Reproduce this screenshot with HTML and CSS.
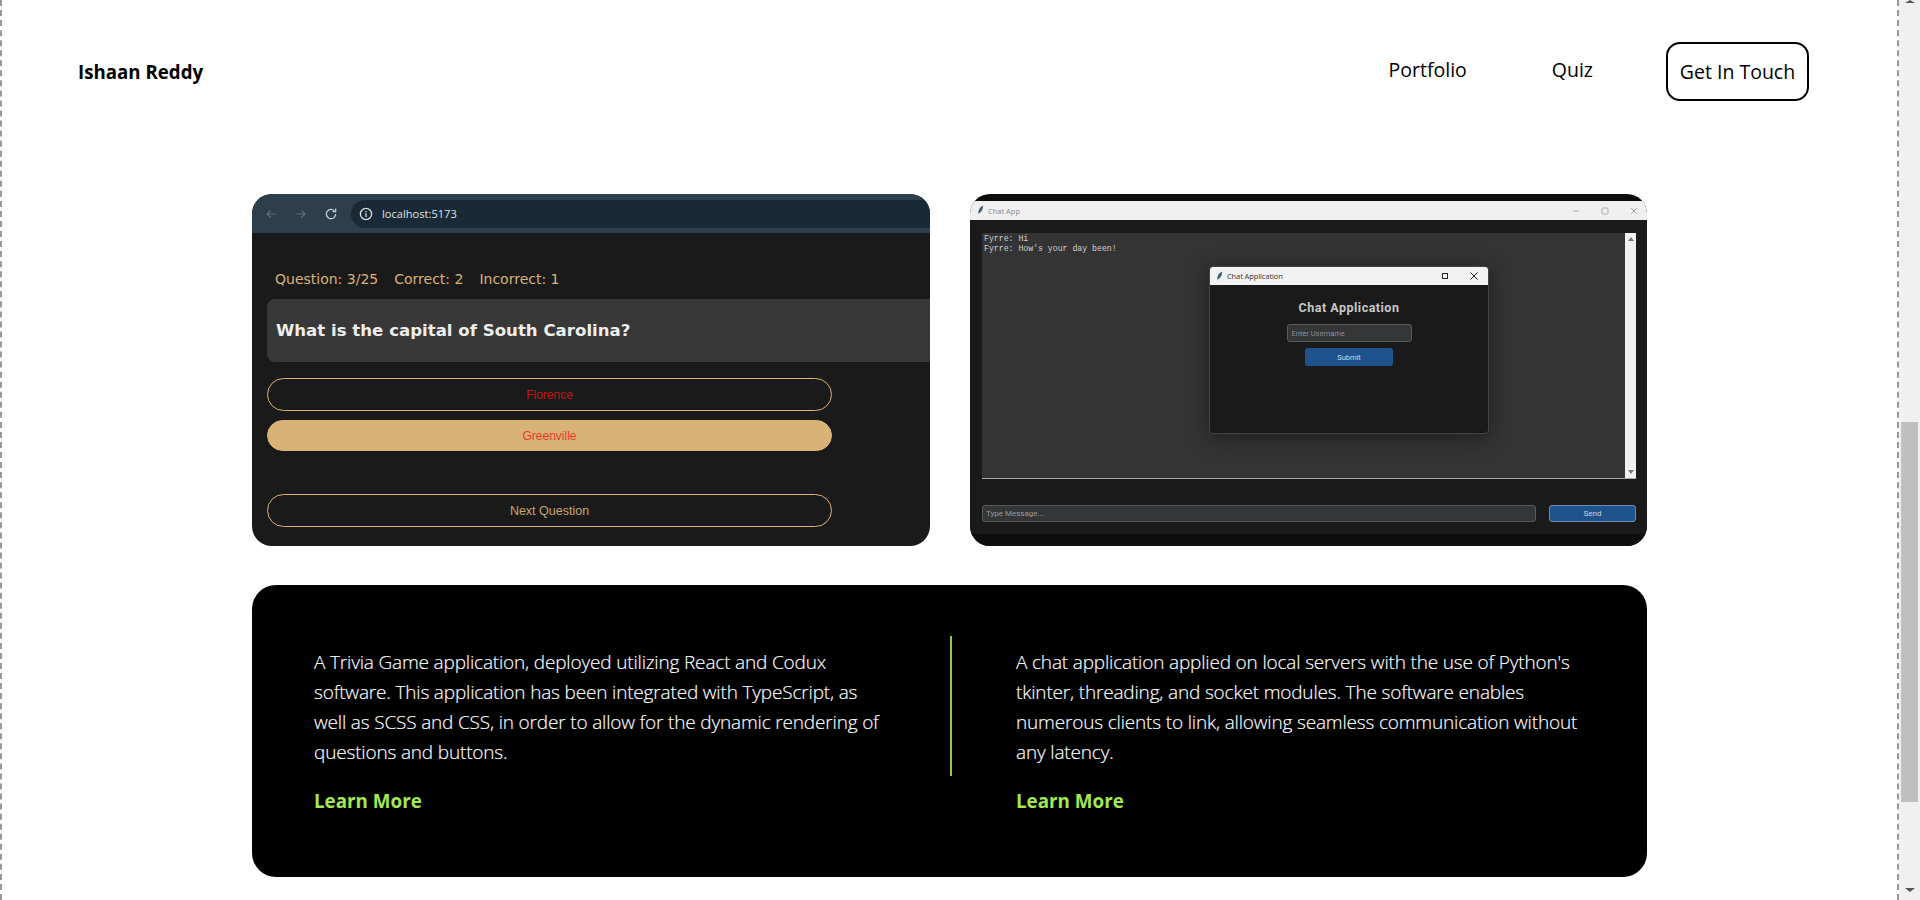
FILE: index.html
```html
<!DOCTYPE html>
<html lang="en">
<head>
    <meta charset="UTF-8">
    <meta name="viewport" content="width=device-width, initial-scale=1.0">
    <title>Ishaan Reddy</title>
    <link rel="stylesheet" href="styles.css">
</head>
<body>
    <div class="page">
        <header class="site-header">
            <div class="brand">Ishaan Reddy</div>
            <nav class="site-nav">
                <a class="nav-link nav-portfolio" href="#">Portfolio</a>
                <a class="nav-link nav-quiz" href="#">Quiz</a>
                <a class="nav-button" href="#">Get In Touch</a>
            </nav>
        </header>

        <main class="projects">
            <div class="shots">
                <!-- trivia game screenshot -->
                <div class="shot trivia">
                    <div class="browser-bar">
                        <svg class="bar-icon" viewBox="0 0 12 12"><path d="M10.5 6H2M5.5 2.5 2 6l3.500 3.500" fill="none" stroke="#5f6f7c" stroke-width="1.100"/></svg>
                        <svg class="bar-icon" viewBox="0 0 12 12"><path d="M1.500 6H10M6.500 2.500 10 6 6.500 9.500" fill="none" stroke="#5f6f7c" stroke-width="1.100"/></svg>
                        <svg class="bar-icon reload" viewBox="0 0 12 12"><path d="M10 6a4 4 0 1 1-1.200-2.850M10 1.300v2.600H7.400" fill="none" stroke="#c6ced4" stroke-width="1.100"/></svg>
                        <div class="url-pill">
                            <svg class="info-icon" viewBox="0 0 12 12"><circle cx="6" cy="6" r="4.800" fill="none" stroke="#dfe4e8" stroke-width="1.100"/><path d="M6 5.300v3.200M6 3.400v1" stroke="#dfe4e8" stroke-width="1.100"/></svg>
                            <span>localhost:5173</span>
                        </div>
                    </div>
                    <div class="quiz-body">
                        <div class="stats"><span>Question: 3/25</span><span>Correct: 2</span><span>Incorrect: 1</span></div>
                        <div class="question">What is the capital of South Carolina?</div>
                        <div class="answer wrong">Florence</div>
                        <div class="answer picked">Greenville</div>
                        <div class="answer next">Next Question</div>
                    </div>
                </div>

                <!-- chat app screenshot -->
                <div class="shot chat">
                    <div class="win-title">
                        <svg class="feather" viewBox="0 0 8 12"><path d="M7 0.500C3.500 1.500 1.500 5 1.500 8.500L0.800 11.500L1.800 9C5 8.500 7 4.500 7 0.500Z" fill="#3c5a78"/></svg>
                        <span class="win-name">Chat App</span>
                        <div class="win-controls">
                            <svg viewBox="0 0 10 10"><path d="M2 5h6" stroke="#aaa"/></svg>
                            <svg viewBox="0 0 10 10"><rect x="2" y="2" width="6" height="6" rx="1" fill="none" stroke="#aaa"/></svg>
                            <svg viewBox="0 0 10 10"><path d="M2 2l6 6M8 2l-6 6" stroke="#aaa"/></svg>
                        </div>
                    </div>
                    <div class="chat-body">
                        <div class="log-row">
                            <div class="log">Fyrre: Hi<br>Fyrre: How's your day been!</div>
                            <div class="log-scroll"><i class="tri-up"></i><i class="tri-down"></i></div>
                        </div>
                        <div class="entry-row">
                            <div class="entry">Type Message...</div>
                            <div class="send">Send</div>
                        </div>
                    </div>
                    <div class="chat-foot"></div>

                    <div class="modal">
                        <div class="modal-title">
                            <svg class="feather" viewBox="0 0 8 12"><path d="M7 0.500C3.500 1.500 1.500 5 1.500 8.500L0.800 11.500L1.800 9C5 8.500 7 4.500 7 0.500Z" fill="#3c5a78"/></svg>
                            <span class="modal-name">Chat Application</span>
                            <div class="modal-controls">
                                <svg viewBox="0 0 10 10"><rect x="2.500" y="2.500" width="5" height="5" fill="none" stroke="#222"/></svg>
                                <svg viewBox="0 0 10 10"><path d="M1.500 1.500l7 7M8.500 1.500l-7 7" stroke="#222"/></svg>
                            </div>
                        </div>
                        <div class="modal-body">
                            <div class="modal-heading">Chat Application</div>
                            <div class="modal-input">Enter Username</div>
                            <div class="modal-submit">Submit</div>
                        </div>
                    </div>
                </div>
            </div>

            <section class="panel">
                <div class="panel-col">
                    <p>A Trivia Game application, deployed utilizing React and Codux software. This application has been integrated with TypeScript, as well as SCSS and CSS, in order to allow for the dynamic rendering of questions and buttons.</p>
                    <a class="learn" href="#">Learn More</a>
                </div>
                <div class="panel-divider"></div>
                <div class="panel-col panel-col-right">
                    <p>A chat application applied on local servers with the use of Python's tkinter, threading, and socket modules. The software enables numerous clients to link, allowing seamless communication without any latency.</p>
                    <a class="learn" href="#">Learn More</a>
                </div>
            </section>
        </main>
    </div>

    <div class="scrollbar">
        <i class="scroll-up"></i>
        <div class="scroll-thumb"></div>
        <i class="scroll-down"></i>
    </div>
</body>
</html>
```

FILE: styles.css
```css
* {
    box-sizing: border-box;
}
body {
    margin: 0;
    height: 900px;
    display: flex;
    overflow: hidden;
    background-color: #fff;
    color: #000;
    font-family: "Open Sans", "Liberation Sans", sans-serif;
}
a {
    color: inherit;
    text-decoration: none;
}
.page {
    flex: 1;
    min-width: 0;
    border-left: 2px dashed #999;
    border-right: 2px dashed #999;
}

/* header */
.site-header {
    display: flex;
    justify-content: space-between;
    align-items: center;
    padding: 42px 88px 0 76px;
}
.brand {
    font-size: 18.700px;
    font-weight: 700;
}
.site-nav {
    display: flex;
    align-items: center;
}
.nav-link {
    font-size: 19.500px;
    margin-top: -4px;
}
.nav-portfolio {
    margin-right: 85px;
}
.nav-quiz {
    margin-right: 73px;
}
.nav-button {
    display: flex;
    align-items: center;
    justify-content: center;
    width: 143px;
    height: 59px;
    font-size: 19.500px;
    border: 2px solid #000;
    border-radius: 14px;
}

/* screenshots */
.projects {
    width: 1395px;
    margin: 93px auto 0;
}
.shots {
    display: grid;
    grid-template-columns: 678px 677px;
    gap: 40px;
}
.shot {
    position: relative;
    height: 352px;
    overflow: hidden;
    border-radius: 20px;
}
.trivia {
    background-color: #1a1a1a;
    font-family: "DejaVu Sans", sans-serif;
}
.browser-bar {
    display: flex;
    align-items: center;
    height: 39px;
    padding: 0 0 0 13px;
    background-color: #2d3e4d;
}
.bar-icon {
    width: 12px;
    height: 12px;
    margin-right: 18px;
}
.reload {
    width: 14px;
    height: 14px;
    margin-left: -1px;
    margin-right: 0;
}
.url-pill {
    flex: 1;
    display: flex;
    align-items: center;
    height: 28px;
    margin-left: 13px;
    padding-left: 8px;
    border-radius: 14px 0 0 14px;
    background-color: #192936;
    color: #dfe4e8;
    font-family: "Open Sans", sans-serif;
    font-size: 11.100px;
}
.info-icon {
    width: 14px;
    height: 14px;
    margin-right: 9px;
}
.quiz-body {
    padding: 37px 0 0 15px;
}
.stats {
    display: flex;
    gap: 16px;
    padding-left: 8px;
    font-size: 14px;
    line-height: 18px;
    color: #d9b277;
}
.question {
    display: flex;
    align-items: center;
    height: 63px;
    margin-top: 11px;
    padding-left: 9px;
    border-radius: 8px 0 0 8px;
    background-color: #383838;
    color: #eee;
    font-size: 16.600px;
    font-weight: 700;
}
.answer {
    display: flex;
    align-items: center;
    justify-content: center;
    width: 565px;
    height: 33px;
    margin-top: 9px;
    border: 1.500px solid #d9b277;
    border-radius: 17px;
    font-family: "Liberation Sans", sans-serif;
    font-size: 12px;
}
.wrong {
    margin-top: 16px;
    color: #c01818;
}
.picked {
    height: 31px;
    background-color: #d9b277;
    color: #e53b2a;
}
.next {
    margin-top: 43px;
    font-size: 12.500px;
    color: #c9a672;
}

/* chat window */
.chat {
    padding-top: 7px;
    background-color: #0d0d0d;
}
.win-title {
    display: flex;
    align-items: center;
    height: 19px;
    padding-left: 7px;
    background-color: #f0f0f0;
}
.feather {
    width: 7px;
    height: 11px;
}
.win-name {
    margin-left: 4px;
    font-size: 7.500px;
    color: #8a8a8a;
}
.win-controls {
    display: flex;
    gap: 19px;
    margin-left: auto;
    padding-right: 8px;
}
.win-controls svg {
    width: 10px;
    height: 10px;
}
.chat-body {
    height: 314px;
    padding: 13px 11px 0 12px;
    background-color: #1a1a1a;
}
.log-row {
    display: flex;
    height: 246px;
    border-bottom: 1px solid #aaa;
}
.log {
    flex: 1;
    padding: 1px 2px;
    background-color: #343434;
    color: #cfcfcf;
    font-family: "Liberation Mono", monospace;
    font-size: 8.200px;
    line-height: 10px;
}
.log-scroll {
    display: flex;
    flex-direction: column;
    justify-content: space-between;
    align-items: center;
    width: 11px;
    padding: 4px 0;
    background-color: #f0f0f0;
}
.tri-up,
.tri-down {
    width: 0;
    height: 0;
    border-left: 3px solid transparent;
    border-right: 3px solid transparent;
}
.tri-up {
    border-bottom: 4px solid #777;
}
.tri-down {
    border-top: 4px solid #777;
}
.entry-row {
    display: flex;
    gap: 13px;
    margin-top: 26px;
}
.entry {
    flex: 1;
    display: flex;
    align-items: center;
    height: 17px;
    padding-left: 3px;
    border: 1px solid #565b5e;
    border-radius: 3px;
    background-color: #343638;
    color: #9a9a9a;
    font-family: "Roboto", sans-serif;
    font-size: 8px;
}
.send {
    display: flex;
    align-items: center;
    justify-content: center;
    width: 87px;
    height: 17px;
    border: 1px solid #6f8fb0;
    border-radius: 3px;
    background-color: #1f538d;
    color: #ccd6e0;
    font-family: "Roboto", sans-serif;
    font-size: 8px;
}
.chat-foot {
    height: 12px;
    background-color: #0d0d0d;
}
.modal {
    position: absolute;
    left: 239px;
    top: 72px;
    width: 280px;
    height: 168px;
    overflow: hidden;
    border: 1px solid #444;
    border-radius: 4px;
    background-color: #1a1a1a;
    box-shadow: 0 3px 20px rgba(0, 0, 0, 0.45);
}
.modal-title {
    display: flex;
    align-items: center;
    height: 18px;
    padding-left: 6px;
    background-color: #f2f2f2;
}
.modal-name {
    margin-left: 4px;
    font-size: 7.500px;
    letter-spacing: -0.100px;
    color: #333;
}
.modal-controls {
    display: flex;
    gap: 19px;
    margin-left: auto;
    padding-right: 9px;
}
.modal-controls svg {
    width: 10px;
    height: 10px;
}
.modal-body {
    display: flex;
    flex-direction: column;
    align-items: center;
    font-family: "Roboto", sans-serif;
}
.modal-heading {
    margin-top: 15px;
    font-size: 12.500px;
    font-weight: 700;
    line-height: 16px;
    letter-spacing: 0.500px;
    color: #c8c8c8;
}
.modal-input {
    display: flex;
    align-items: center;
    width: 125px;
    height: 18px;
    margin-top: 8px;
    padding-left: 4px;
    border: 1px solid #565b5e;
    border-radius: 3px;
    background-color: #343638;
    color: #8f8f8f;
    font-size: 7.500px;
}
.modal-submit {
    display: flex;
    align-items: center;
    justify-content: center;
    width: 88px;
    height: 18px;
    margin-top: 6px;
    border-radius: 3px;
    background-color: #1f538d;
    color: #ccd6e0;
    font-size: 7.500px;
}

/* description panel */
.panel {
    display: flex;
    align-items: flex-start;
    height: 292px;
    margin-top: 39px;
    padding-top: 51px;
    border-radius: 24px;
    background-color: #000;
    color: #fff;
}
.panel-col {
    width: 698px;
    padding: 11px 0 0 62px;
}
.panel-col-right {
    width: auto;
    padding-left: 64px;
}
.panel-col p {
    width: 575px;
    margin: 0;
    font-size: 19px;
    font-weight: 300;
    line-height: 30px;
    letter-spacing: -0.170px;
    -webkit-text-stroke: 0.150px #fff;
}
.panel-divider {
    width: 2px;
    height: 140px;
    background-color: #93c94a;
}
.learn {
    display: block;
    margin-top: 21px;
    font-size: 18.800px;
    font-weight: 700;
    line-height: 27px;
    color: #a3e84f;
}

/* window scrollbar */
.scrollbar {
    display: flex;
    flex-direction: column;
    align-items: center;
    flex: 0 0 21px;
    height: 900px;
    background-color: #f0f0f0;
}
.scroll-up {
    width: 0;
    height: 0;
    border-left: 5px solid transparent;
    border-right: 5px solid transparent;
    border-bottom: 3px solid #555;
}
.scroll-thumb {
    width: 17px;
    height: 380px;
    margin-top: 419px;
    background-color: #bfbfbf;
}
.scroll-down {
    width: 0;
    height: 0;
    margin-top: auto;
    margin-bottom: 8px;
    border-left: 5px solid transparent;
    border-right: 5px solid transparent;
    border-top: 4px solid #555;
}
```
